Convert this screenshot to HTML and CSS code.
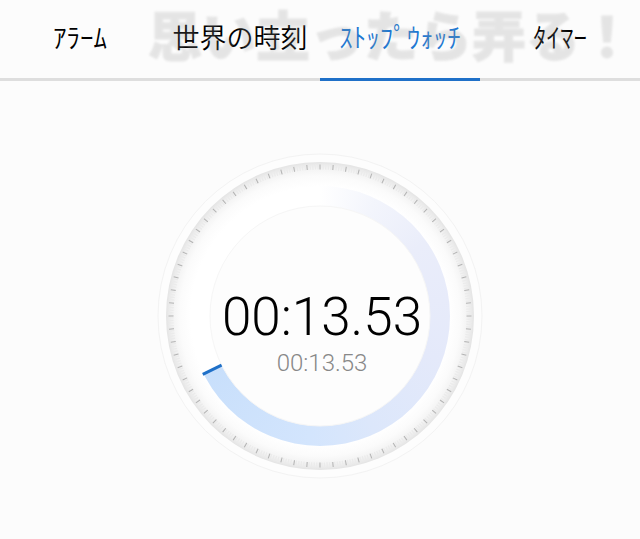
FILE: index.html
```html
<!DOCTYPE html>
<html lang="ja">

<head>
    <meta charset="UTF-8">
    <meta name="viewport" content="width=device-width, initial-scale=1.0">
    <title>ストップウォッチ</title>
    <link rel="stylesheet" href="styles.css">
</head>

<body>
    <header class="header">
        <nav class="tabs">
            <button class="tab" type="button">ｱﾗｰﾑ</button>
            <button class="tab" type="button">世界の時刻</button>
            <button class="tab active" type="button">ｽﾄｯﾌﾟｳｫｯﾁ</button>
            <button class="tab" type="button">ﾀｲﾏｰ</button>
        </nav>
        <div class="caption">思い立ったら弄る！</div>
    </header>

    <main class="stopwatch">
        <div class="dial">
            <svg class="face" viewBox="-163 -163 326 326" aria-hidden="true">
                <defs>
                    <radialGradient id="rim" gradientUnits="userSpaceOnUse" cx="0" cy="0" r="154">
                        <stop offset="0.84" stop-color="#ffffff" />
                        <stop offset="0.91" stop-color="#fbfbfb" />
                        <stop offset="0.96" stop-color="#f3f3f3" />
                        <stop offset="1" stop-color="#e4e4e4" />
                    </radialGradient>
                </defs>
                <circle r="162" fill="#fdfdfd" stroke="#f3f3f3" />
                <circle r="154" fill="url(#rim)" />
                <!-- minor and major ticks, 72 steps -->
                <circle class="minor" r="149" pathLength="720" />
                <circle class="major" r="149" pathLength="720" />
            </svg>
            <div class="progress"></div>
            <svg class="face" viewBox="-163 -163 326 326" aria-hidden="true">
                <circle r="110" fill="#fdfdfd" stroke="#f6f6f6" />
                <line class="hand" x1="0" y1="-110" x2="0" y2="-131" transform="rotate(243.5)" />
            </svg>
            <div class="readout">
                <div class="total">00:13.53</div>
                <div class="lap">00:13.53</div>
            </div>
        </div>
    </main>
</body>

</html>
```
FILE: styles.css
```css
* {
    box-sizing: border-box;
}

body {
    margin: 0;
    font-family: Roboto, "Noto Sans CJK JP", sans-serif;
    color: #000;
    background-color: #fcfcfc;
}

.header {
    position: relative;
}

.tabs {
    display: grid;
    grid-template-columns: repeat(4, 1fr);
}

.tab {
    height: 81px;
    padding: 0 0 4px;
    font-family: "Noto Sans CJK JP", sans-serif;
    font-size: 27px;
    font-weight: 350;
    line-height: 40px;
    white-space: nowrap;
    color: #000;
    background: none;
    border: none;
    border-bottom: 3px solid #dedede;
    cursor: pointer;
}

.tab.active {
    color: #1e78d2;
    border-bottom-color: #1f70c8;
}

.caption {
    position: absolute;
    top: 0;
    right: 6px;
    font-family: "Noto Sans CJK JP", sans-serif;
    font-size: 54px;
    font-weight: 900;
    line-height: 68px;
    white-space: nowrap;
    color: #949494;
    -webkit-text-stroke: 1px #949494;
    opacity: 0.22;
    filter: blur(1px);
    pointer-events: none;
}

.stopwatch {
    display: flex;
    justify-content: center;
    padding: 72px 16px 60px;
}

.dial {
    display: grid;
    width: 100%;
    max-width: 326px;
}

.dial > * {
    grid-area: 1 / 1;
}

.face {
    display: block;
    width: 100%;
}

.minor,
.major {
    fill: none;
    stroke-width: 5px;
}

.minor {
    stroke: #ebebeb;
    stroke-dasharray: 1 1;
}

.major {
    stroke: #b4b4b4;
    stroke-dasharray: 0.8 9.2;
    stroke-dashoffset: 0.4;
}

.progress {
    margin: 33px;
    border-radius: 50%;
    background: conic-gradient(#ffffff 0deg, #f3f5fc 25deg, #eaedfa 55deg, #e4e9fa 110deg, #dce7fb 155deg, #d3e5fd 185deg, #c8dffb 243.5deg, transparent 243.5deg);
}

.hand {
    stroke: #1f70c8;
    stroke-width: 3px;
}

.readout {
    display: flex;
    flex-direction: column;
    align-items: center;
    padding: 132px 0 0 4px;
    font-weight: 300;
}

.total {
    font-size: 53px;
    line-height: 64px;
}

.lap {
    font-size: 24px;
    line-height: 28px;
    color: #888;
}
```
